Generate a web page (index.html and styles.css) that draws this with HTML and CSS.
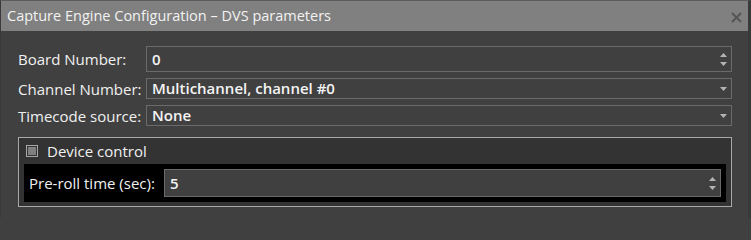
FILE: index.html
```html
<!DOCTYPE html>
<html>
<head>
<meta charset="utf-8">
<link rel="stylesheet" href="styles.css">
</head>
<body>
<div class="window">
  <div class="titlebar">
    <span class="title">Capture Engine Configuration – DVS parameters</span>
    <svg class="close" width="11" height="11" viewBox="0 0 11 11"><path d="M1 1 L10 10 M10 1 L1 10" stroke="#555" stroke-width="2" fill="none"/></svg>
  </div>
  <div class="content">
    <div class="row">
      <span class="label">Board Number:</span>
      <div class="field tall">
        <span class="value">0</span>
        <span class="spin">
          <svg width="7" height="4" viewBox="0 0 7 4"><polygon points="0,4 3.5,0 7,4" fill="#b4b4b4"/></svg>
          <svg width="7" height="4" viewBox="0 0 7 4"><polygon points="0,0 7,0 3.5,4" fill="#b4b4b4"/></svg>
        </span>
      </div>
    </div>
    <div class="row">
      <span class="label">Channel Number:</span>
      <div class="field">
        <span class="value">Multichannel, channel #0</span>
        <svg class="drop" width="7" height="4" viewBox="0 0 7 4"><polygon points="0,0 7,0 3.5,4" fill="#b4b4b4"/></svg>
      </div>
    </div>
    <div class="row">
      <span class="label">Timecode source:</span>
      <div class="field">
        <span class="value">None</span>
        <svg class="drop" width="7" height="4" viewBox="0 0 7 4"><polygon points="0,0 7,0 3.5,4" fill="#b4b4b4"/></svg>
      </div>
    </div>
    <div class="group">
      <div class="group-head">
        <span class="checkbox"><span class="check-fill"></span></span>
        <span class="group-title">Device control</span>
      </div>
      <div class="panel">
        <span class="panel-label">Pre-roll time (sec):</span>
        <div class="field preroll">
          <span class="value">5</span>
          <span class="spin">
            <svg width="7" height="4" viewBox="0 0 7 4"><polygon points="0,4 3.5,0 7,4" fill="#b4b4b4"/></svg>
            <svg width="7" height="4" viewBox="0 0 7 4"><polygon points="0,0 7,0 3.5,4" fill="#b4b4b4"/></svg>
          </span>
        </div>
      </div>
    </div>
  </div>
</div>
</body>
</html>
```
FILE: styles.css
```css
html, body {
  margin: 0;
  padding: 0;
  background: #404040;
}
body {
  font-family: "Open Sans", "Noto Sans", sans-serif;
  color: #f0f0f0;
}
.window {
  width: 751px;
  height: 218px;
  box-sizing: border-box;
  border-top: 1px solid #5c5c5c;
  border-left: 1px solid #3a3a3a;
  border-right: 3px solid #3a3a3a;
  background: #404040;
  overflow: hidden;
}
.titlebar {
  height: 30px;
  background: #808080;
  display: flex;
  align-items: center;
  justify-content: space-between;
  padding: 0 6px 0 6px;
}
.title {
  font-size: 14.5px;
  line-height: 20px;
  color: #f2f2f2;
}
.close {
  margin-top: 2px;
}
.content {
  padding: 15px 16px 0 17px;
}
.row {
  display: flex;
  align-items: center;
  margin-bottom: 6px;
}
.label {
  width: 128px;
  flex: none;
  font-size: 15px;
  line-height: 20px;
  white-space: nowrap;
}
.field {
  flex: 1;
  height: 21px;
  box-sizing: border-box;
  border: 1px solid #6a6a6a;
  background: #404040;
  display: flex;
  align-items: center;
  justify-content: space-between;
  padding: 0 4px 0 5px;
}
.field.tall {
  height: 26px;
}
.value {
  font-size: 15px;
  line-height: 19px;
  font-weight: 600;
  color: #f4f4f4;
}
.spin {
  display: flex;
  flex-direction: column;
  gap: 5px;
}
.spin svg, .drop {
  display: block;
}
.group {
  margin-top: 11px;
  border: 1px solid #a8a8a8;
  background: #333333;
  padding: 0 5px 4px 5px;
}
.group-head {
  height: 26px;
  display: flex;
  align-items: center;
  padding-left: 2px;
}
.checkbox {
  width: 12px;
  height: 12px;
  box-sizing: border-box;
  border: 1px solid #a8a8a8;
  padding: 1px;
  display: inline-block;
  margin-right: 9px;
}
.check-fill {
  display: block;
  width: 100%;
  height: 100%;
  background: #808080;
}
.group-title {
  font-size: 15px;
  line-height: 20px;
}
.panel {
  background: #000000;
  padding: 5px;
  display: flex;
  align-items: center;
}
.panel-label {
  width: 135px;
  flex: none;
  font-size: 15px;
  line-height: 20px;
  white-space: nowrap;
}
.field.preroll {
  height: 28px;
}
```
